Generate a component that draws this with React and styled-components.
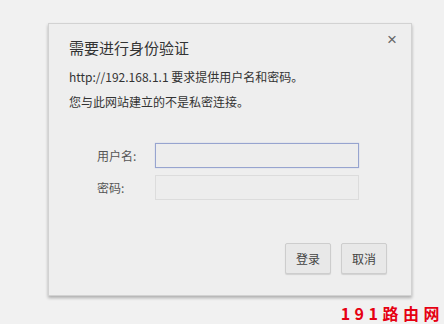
import React from 'react'
import styled, { createGlobalStyle } from 'styled-components'

const GlobalStyle = createGlobalStyle`
    html, body {
        margin: 0;
        padding: 0;
        background: #f1f1f1;
    }
    body {
        font-family: "Microsoft YaHei", "Noto Sans CJK SC", "Liberation Sans", sans-serif;
    }
`

function App() {
    return (
        <Page>
            <GlobalStyle />
            <Dialog>
                <Close>×</Close>
                <Title>需要进行身份验证</Title>
                <Messages>
                    <Message>http://192.168.1.1 要求提供用户名和密码。</Message>
                    <Message>您与此网站建立的不是私密连接。</Message>
                </Messages>
                <Form>
                    <Row>
                        <Label>用户名:</Label>
                        <Input focused />
                    </Row>
                    <Row>
                        <Label>密码:</Label>
                        <Input type="password" />
                    </Row>
                </Form>
                <Actions>
                    <Btn>登录</Btn>
                    <Btn>取消</Btn>
                </Actions>
            </Dialog>
            <Watermark>191路由网</Watermark>
        </Page>
    )
}

export default App

const Page = styled.div`
    width: 444px;
    height: 324px;
    box-sizing: border-box;
    padding: 23px 0 0 48px;
    display: flex;
    flex-direction: column;
    overflow: hidden;
`

const Dialog = styled.div`
    position: relative;
    width: 364px;
    height: 273px;
    box-sizing: border-box;
    padding: 14px 24px 0 20px;
    background: #eeeeee;
    border: 1px solid #d2d2d2;
    box-shadow: 0 2px 3px rgba(0, 0, 0, 0.28);
    display: flex;
    flex-direction: column;
    color: #333;
`

const Close = styled.span`
    position: absolute;
    top: 6px;
    right: 14px;
    font-size: 17px;
    color: #666;
    font-family: "Liberation Sans", sans-serif;
`

const Title = styled.div`
    font-size: 15px;
    line-height: 20px;
    color: #333;
`

const Messages = styled.div`
    margin-top: 6px;
    display: flex;
    flex-direction: column;
`

const Message = styled.div`
    font-size: 12px;
    line-height: 25px;
    color: #333;
`

const Form = styled.div`
    margin-top: 29px;
    display: flex;
    flex-direction: column;
    gap: 7px;
`

const Row = styled.div`
    display: flex;
    align-items: center;
`

const Label = styled.span`
    width: 58px;
    padding-left: 28px;
    font-size: 12px;
    color: #555;
`

const Input = styled.input`
    width: 204px;
    height: 25px;
    box-sizing: border-box;
    margin: 0;
    background: #ededed;
    border: 1px solid ${p => p.focused ? '#97a4cf' : '#dcdcdc'};
    box-shadow: ${p => p.focused ? '0 0 1px #b4bee0' : 'none'};
    outline: none;
`

const Actions = styled.div`
    margin-top: auto;
    margin-bottom: 21px;
    display: flex;
    justify-content: flex-end;
    gap: 10px;
`

const Btn = styled.button`
    width: 46px;
    height: 31px;
    padding: 0;
    background: #e8e8e8;
    border: 1px solid #cdcdcd;
    border-radius: 2px;
    box-shadow: 0 1px 1px rgba(0, 0, 0, 0.12);
    font-size: 12px;
    color: #444;
    font-family: inherit;
`

const Watermark = styled.div`
    align-self: flex-end;
    margin-top: 6px;
    margin-right: 0;
    font-size: 16px;
    font-weight: bold;
    letter-spacing: 4.5px;
    color: #e60012;
    font-family: "Noto Sans CJK SC", sans-serif;
    line-height: 22px;
`
